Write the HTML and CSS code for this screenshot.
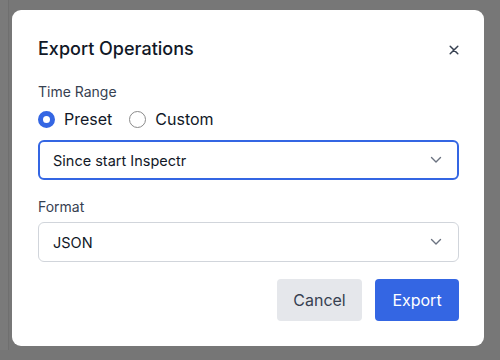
FILE: index.html
```html
<!DOCTYPE html>
<html>
<head>
<meta charset="utf-8">
<link rel="stylesheet" href="styles.css">
</head>
<body>
<div class="backdrop">
  <div class="dialog">
    <div class="header">
      <h2 class="title">Export Operations</h2>
      <button class="close" aria-label="Close">
        <svg width="10" height="10" viewBox="0 0 10 10"><path d="M1.2 1.2L8.8 8.8M8.8 1.2L1.2 8.8" stroke="#374151" stroke-width="1.5" stroke-linecap="round"/></svg>
      </button>
    </div>
    <div class="label first">Time Range</div>
    <div class="radios">
      <label class="radio"><span class="dot checked"></span>Preset</label>
      <label class="radio"><span class="dot"></span>Custom</label>
    </div>
    <div class="select focused">
      <span>Since start Inspectr</span>
      <svg class="chev" width="12" height="8" viewBox="0 0 12 8"><path d="M1.5 1.5L6 6L10.5 1.5" fill="none" stroke="#6b7280" stroke-width="1.4" stroke-linecap="round" stroke-linejoin="round"/></svg>
    </div>
    <div class="label second">Format</div>
    <div class="select">
      <span>JSON</span>
      <svg class="chev" width="12" height="8" viewBox="0 0 12 8"><path d="M1.5 1.5L6 6L10.5 1.5" fill="none" stroke="#6b7280" stroke-width="1.4" stroke-linecap="round" stroke-linejoin="round"/></svg>
    </div>
    <div class="actions">
      <button class="btn cancel">Cancel</button>
      <button class="btn primary">Export</button>
    </div>
  </div>
</div>
</body>
</html>
```
FILE: styles.css
```css
html, body {
  margin: 0;
  padding: 0;
}
body {
  width: 500px;
  height: 360px;
  background: #767676;
  font-family: Inter, "Noto Sans", "Liberation Sans", sans-serif;
  overflow: hidden;
}
.backdrop {
  padding: 10px 16px 0 12px;
  height: 350px;
  box-sizing: border-box;
  background: linear-gradient(to right, #7a7a7a 0, #7a7a7a 8px, #6f6f6f 8px, #6f6f6f 9px, #777 9px);
}
.dialog {
  width: 472px;
  height: 336px;
  box-sizing: border-box;
  background: #fff;
  border-radius: 9px;
  padding: 25px 25px 25px 26px;
  display: flex;
  flex-direction: column;
}
.header {
  display: flex;
  align-items: center;
  justify-content: space-between;
  height: 28px;
}
.title {
  margin: 0;
  font-size: 18px;
  font-weight: 500;
  color: #111827;
  line-height: 28px;
}
.close {
  border: 0;
  background: none;
  padding: 0;
  width: 12px;
  height: 12px;
  display: flex;
  align-items: center;
  justify-content: center;
  margin-right: -1px;
  margin-top: 2px;
}
.label {
  font-size: 14px;
  line-height: 20px;
  color: #374151;
}
.label.first { margin-top: 19px; }
.label.second { margin-top: 17px; }
.radios {
  display: flex;
  align-items: center;
  gap: 17px;
  height: 24px;
  margin-top: 5px;
  margin-bottom: 9px;
}
.radio {
  display: flex;
  align-items: center;
  font-size: 16px;
  color: #111827;
}
.dot {
  width: 17px;
  height: 17px;
  box-sizing: border-box;
  border-radius: 50%;
  border: 1px solid #8a8a8a;
  margin-right: 9px;
  background: #fff;
}
.dot.checked {
  border: 5.5px solid #3466e3;
  background: #fff;
}
.select {
  height: 40px;
  box-sizing: border-box;
  border: 1px solid #d1d5db;
  border-radius: 6px;
  display: flex;
  align-items: center;
  justify-content: space-between;
  padding: 0 16px 0 14px;
  font-size: 14.5px;
  color: #111827;
}
.select.focused {
  border: 2px solid #3466e3;
  padding: 0 15px 0 13px;
}
.label.second + .select { margin-top: 5px; }
.actions {
  display: flex;
  justify-content: flex-end;
  gap: 13px;
  margin-top: 17px;
}
.btn {
  height: 42px;
  border: 0;
  border-radius: 4px;
  font-family: inherit;
  font-size: 16px;
  padding: 0;
}
.cancel {
  width: 85px;
  background: #e5e7eb;
  color: #374151;
}
.primary {
  width: 84px;
  background: #3466e3;
  color: #fff;
}
```
